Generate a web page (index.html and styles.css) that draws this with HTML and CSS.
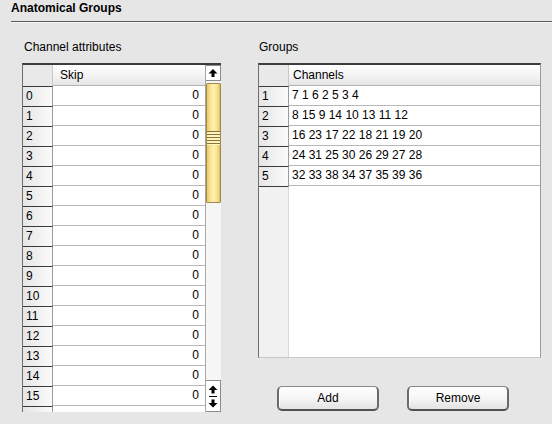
FILE: index.html
```html
<!DOCTYPE html>
<html>
<head>
<meta charset="utf-8">
<link rel="stylesheet" href="styles.css">
</head>
<body>
<div class="page">
  <div class="title">Anatomical Groups</div>
  <div class="rule"></div>
  <div class="content">
    <div class="left">
      <div class="label">Channel attributes</div>
      <div class="table ltable">
        <div class="grid">
          <div class="row head"><div class="rh corner"></div><div class="hc">Skip</div></div>
          <div class="row"><div class="rh">0</div><div class="dc num">0</div></div>
          <div class="row"><div class="rh">1</div><div class="dc num">0</div></div>
          <div class="row"><div class="rh">2</div><div class="dc num">0</div></div>
          <div class="row"><div class="rh">3</div><div class="dc num">0</div></div>
          <div class="row"><div class="rh">4</div><div class="dc num">0</div></div>
          <div class="row"><div class="rh">5</div><div class="dc num">0</div></div>
          <div class="row"><div class="rh">6</div><div class="dc num">0</div></div>
          <div class="row"><div class="rh">7</div><div class="dc num">0</div></div>
          <div class="row"><div class="rh">8</div><div class="dc num">0</div></div>
          <div class="row"><div class="rh">9</div><div class="dc num">0</div></div>
          <div class="row"><div class="rh">10</div><div class="dc num">0</div></div>
          <div class="row"><div class="rh">11</div><div class="dc num">0</div></div>
          <div class="row"><div class="rh">12</div><div class="dc num">0</div></div>
          <div class="row"><div class="rh">13</div><div class="dc num">0</div></div>
          <div class="row"><div class="rh">14</div><div class="dc num">0</div></div>
          <div class="row"><div class="rh">15</div><div class="dc num">0</div></div>
          <div class="row"><div class="rh"></div><div class="dc num"></div></div>
        </div>
        <div class="scrollbar">
          <div class="sbtn">
            <svg width="10" height="10" viewBox="0 0 10 10"><path d="M5 1 L9.5 5.5 H6.5 V9 H3.5 V5.5 H0.5 Z" fill="#000"/></svg>
          </div>
          <div class="track">
            <div class="thumb"><div class="grip"></div></div>
          </div>
          <div class="sbtn2">
            <svg width="10" height="9" viewBox="0 0 10 9"><path d="M5 0.5 L9.5 5 H6.5 V8.5 H3.5 V5 H0.5 Z" fill="#000"/></svg>
            <div class="sep"></div>
            <svg width="10" height="9" viewBox="0 0 10 9"><path d="M5 8.5 L9.5 4 H6.5 V0.5 H3.5 V4 H0.5 Z" fill="#000"/></svg>
          </div>
        </div>
      </div>
    </div>
    <div class="right">
      <div class="label glabel">Groups</div>
      <div class="table rtable">
        <div class="row head"><div class="rh corner"></div><div class="hc">Channels</div></div>
        <div class="row"><div class="rh">1</div><div class="dc">7 1 6 2 5 3 4</div></div>
        <div class="row"><div class="rh">2</div><div class="dc">8 15 9 14 10 13 11 12</div></div>
        <div class="row"><div class="rh">3</div><div class="dc">16 23 17 22 18 21 19 20</div></div>
        <div class="row"><div class="rh">4</div><div class="dc">24 31 25 30 26 29 27 28</div></div>
        <div class="row"><div class="rh">5</div><div class="dc">32 33 38 34 37 35 39 36</div></div>
        <div class="row filler"><div class="rh empty"></div><div class="dc empty"></div></div>
      </div>
      <div class="buttons">
        <button class="btn">Add</button>
        <button class="btn">Remove</button>
      </div>
    </div>
  </div>
</div>
</body>
</html>
```

FILE: styles.css
```css
html, body {
  margin: 0;
  padding: 0;
}
body {
  background: #e6e6e6;
  font-family: "Liberation Sans", Arial, sans-serif;
  font-size: 12px;
  color: #000;
  width: 552px;
  height: 424px;
  overflow: hidden;
}
.page {
  display: flex;
  flex-direction: column;
}
.title {
  font-weight: bold;
  padding: 1px 0 0 11px;
  height: 20px;
  line-height: 15px;
}
.rule {
  margin-left: 11px;
  height: 1px;
  background: #5c5c5c;
  border-bottom: 1px solid #f6f6f6;
}
.content {
  display: flex;
  padding-left: 22px;
  padding-top: 17px;
}
.left {
  width: 199px;
  display: flex;
  flex-direction: column;
}
.right {
  width: 283px;
  margin-left: 37px;
  display: flex;
  flex-direction: column;
}
.label {
  height: 23px;
  line-height: 15px;
  padding-left: 2px;
}
.glabel {
  padding-left: 1px;
}
.table {
  border-left: 1px solid #6e6e6e;
  border-top: 2px solid #3c3c3c;
  box-sizing: border-box;
  background: #fff;
}
.ltable {
  height: 349px;
  display: flex;
  overflow: hidden;
}
.grid {
  flex: 1;
  overflow: hidden;
}
.rtable {
  height: 295px;
  display: flex;
  flex-direction: column;
  border-right: 1px solid #9a9a9a;
  border-bottom: 1px solid #c8c8c8;
}
.row {
  display: grid;
  grid-template-columns: 30px 1fr;
  height: 20px;
}
.row.head {
  height: 21px;
}
.rh {
  box-sizing: border-box;
  border-top: 1px solid #3a3a3a;
  border-right: 1px solid #9c9c9c;
  background: linear-gradient(to right, #e6e6e6, #f4f4f4 70%, #fafafa);
  padding-left: 3px;
  line-height: 19px;
}
.rh.corner {
  border-top: none;
  background: #e9e9e9;
  border-right: 1px solid #c8c8c8;
}
.hc {
  box-sizing: border-box;
  background: linear-gradient(to bottom, #ffffff, #f2f2f2 60%, #e4e4e4);
  border-bottom: 1px solid #b4b4b4;
  padding-left: 7px;
  line-height: 20px;
}
.rtable .hc {
  padding-left: 4px;
}
.dc {
  box-sizing: border-box;
  background: #fff;
  border-bottom: 1px solid #b8b8b8;
  padding-left: 3px;
  line-height: 19px;
  white-space: nowrap;
}
.dc.num {
  text-align: right;
  padding-right: 6px;
}
.row.filler {
  flex: 1;
}
.rh.empty {
  border-top: 1px solid #3a3a3a;
  background: #f1f1f1;
  border-right: 1px solid #d8d8d8;
}
.dc.empty {
  border-bottom: none;
}
.scrollbar {
  width: 16px;
  display: flex;
  flex-direction: column;
  background: #f6f6f6;
  border-left: 1px solid #a6a6a6;
  box-sizing: border-box;
}
.sbtn {
  height: 16px;
  box-sizing: border-box;
  border: 1px solid #8c8c8c;
  border-left: none;
  background: #fff;
  display: flex;
  align-items: center;
  justify-content: center;
}
.track {
  flex: 1;
  padding-top: 2px;
  display: flex;
  flex-direction: column;
}
.thumb {
  height: 120px;
  box-sizing: border-box;
  border: 1px solid #a08a48;
  border-radius: 1px;
  background: linear-gradient(to right, #e8c868, #fde79a 30%, #fff0b0 55%, #f6dc84 85%, #d8b860);
  display: flex;
  align-items: center;
  justify-content: center;
}
.grip {
  width: 100%;
  height: 14px;
  margin-top: -10px;
  background: repeating-linear-gradient(to bottom, #8a7434 0, #8a7434 1px, #fff4c0 1px, #fff4c0 3px);
}
.sbtn2 {
  height: 32px;
  box-sizing: border-box;
  border: 1px solid #8c8c8c;
  border-left: none;
  background: #fff;
  display: flex;
  flex-direction: column;
  align-items: center;
  justify-content: center;
  gap: 2px;
}
.sep {
  width: 8px;
  height: 1px;
  background: #000;
}
.buttons {
  display: flex;
  gap: 28px;
  padding-left: 19px;
  padding-top: 28px;
}
.btn {
  width: 102px;
  height: 25px;
  font-family: "Liberation Sans", Arial, sans-serif;
  font-size: 12px;
  color: #000;
  border: 1px solid #8a8a8a;
  border-left: 2px solid #6a6a6a;
  border-right: 2px solid #6a6a6a;
  border-bottom: 2px solid #505050;
  border-radius: 5px;
  background: linear-gradient(to bottom, #ffffff, #f6f6f6 50%, #e2e2e2);
  padding: 0;
  box-shadow: inset 1px 1px 0 #fff;
}
```
